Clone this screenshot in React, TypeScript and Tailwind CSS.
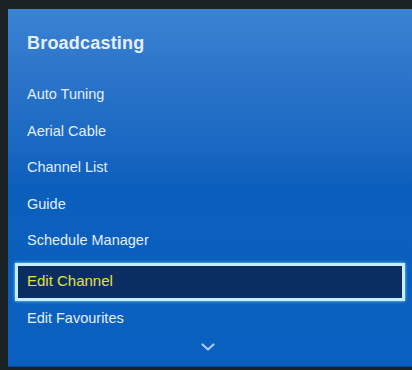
import React from 'react';

const items = ['Auto Tuning', 'Aerial Cable', 'Channel List', 'Guide', 'Schedule Manager'];

function App() {
  return (
    <div className="h-[370px] w-[412px] overflow-hidden bg-[#1b2225] pl-[8px] pt-[9px]" style={{ fontFamily: '"Liberation Sans", Arial, sans-serif' }}>
      <div className="relative h-[358px] bg-gradient-to-b from-[#3a82d2] via-[#0b5fbc] to-[#0a60c0] border-b border-[#0a4a90]">
        <div className="h-[67px] pt-[23px] pl-[19px]">
          <h1 className="text-[18px] leading-[22px] font-bold text-[#e6f0fb] tracking-[0.2px]">Broadcasting</h1>
        </div>
        <ul className="pt-[1px]">
          {items.map((item) => (
            <li key={item} className="h-[36.5px] flex items-center pl-[19px] text-[14.5px] text-[#e4eefa]">
              {item}
            </li>
          ))}
        </ul>
        <div className="mt-[3px] mx-[7px] h-[38px] border-[3px] border-[#c6eefe] bg-[#0b2e62] flex items-center pl-[9px] text-[15px] text-[#e2e23c] shadow-[0_0_3px_#8fd8ff]">
          Edit Channel
        </div>
        <div className="h-[37px] flex items-center pl-[19px] text-[14.5px] text-[#e4eefa]">Edit Favourites</div>
        <div className="mt-[5px] flex justify-center pr-[5px]">
          <svg width="14" height="8" viewBox="0 0 14 8" fill="none">
            <path d="M1.5 1.5 L7 6.5 L12.5 1.5" stroke="#a9cdf2" strokeWidth="2.2" strokeLinecap="round" strokeLinejoin="round" />
          </svg>
        </div>
      </div>
    </div>
  );
}

export default App;
